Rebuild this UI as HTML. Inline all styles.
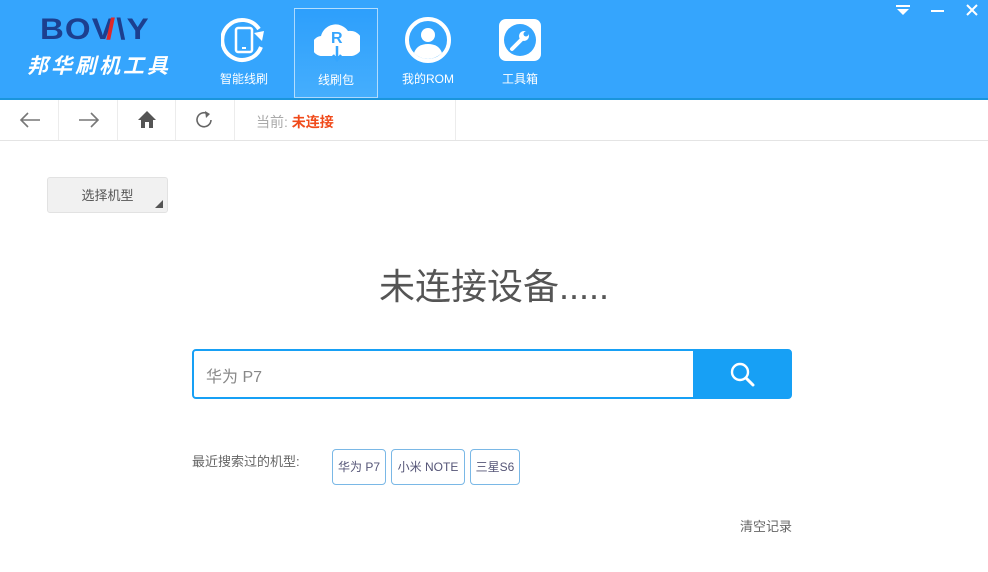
<!DOCTYPE html>
<html><head><meta charset="utf-8"><style>
*{margin:0;padding:0;box-sizing:border-box}
body{width:988px;height:572px;overflow:hidden;background:#fff;font-family:"Liberation Sans","Noto Sans CJK SC",sans-serif;position:relative}
.hdr{position:absolute;left:0;top:0;width:988px;height:100px;background:#35a5fd;border-bottom:2px solid #1a95dc}
.logo{position:absolute;left:40px;top:13px;font:bold 30px "Liberation Sans",sans-serif;color:#1c3f8f;letter-spacing:1px;transform:scaleX(1.1);transform-origin:left}
.logo2{position:absolute;left:27px;top:50px;color:#fff;font-size:21px;font-weight:bold;font-style:italic;letter-spacing:3px}
.nav{position:absolute;top:8px;width:84px;height:90px;text-align:center;color:#fff;font-size:12px}
.nav.sel{border:1px solid rgba(255,255,255,.6);background:linear-gradient(#2d9ffc,#45aefd)}
.nav svg{position:absolute;left:19px;top:9px}
.nav span{position:absolute;left:0;right:0;top:62px}
.ctl{position:absolute;top:2px;color:#fff}
.tb{position:absolute;top:100px;left:0;width:988px;height:41px;border-bottom:1px solid #e4e4e4}
.tb .d{position:absolute;top:0;height:40px;border-left:1px solid #ececec}
.sel2{position:absolute;left:47px;top:177px;width:121px;height:36px;background:#f1f1f1;border:1px solid #e2e2e2;border-radius:3px;font-size:13px;color:#555;text-align:center;line-height:36px}
.title{position:absolute;left:0;width:988px;top:258px;text-align:center;font-size:36px;color:#555}
.search{position:absolute;left:192px;top:349px;width:600px;height:50px;border:2px solid #17a0f5;border-radius:4px;background:#fff}
.search .t{position:absolute;left:12px;top:12px;font-size:16px;color:#888}
.search .b{position:absolute;right:0;top:0;width:97px;height:46px;background:#17a0f5}
.tag{position:absolute;top:449px;height:36px;border:1px solid #7ab8e6;border-radius:4px;font-size:12px;color:#557;line-height:34px;text-align:center}
</style></head><body>
<div class="hdr">
<div class="logo">BOV<span style="color:#e02828;margin-left:-8px">/</span>\Y</div>
<div class="logo2">邦华刷机工具</div>
<div class="nav" style="left:202px"><svg width="46" height="46" viewBox="0 0 46 46"><path d="M38 12 A20 20 0 1 0 40 30" fill="none" stroke="#fff" stroke-width="4"/><path d="M33 16 L43 14 L41 24Z" fill="#fff"/><rect x="15" y="11" width="16" height="24" rx="2" fill="none" stroke="#fff" stroke-width="2.5"/><rect x="21" y="30" width="4" height="2" fill="#fff"/></svg><span>智能线刷</span></div>
<div class="nav sel" style="left:294px"><svg width="46" height="46" viewBox="0 0 46 46"><path d="M9 38 A10 10 0 0 1 7 18 A15 15 0 0 1 34 13 A12 12 0 0 1 38 38Z" fill="#fff"/><text x="17" y="25" font-size="16" font-weight="bold" fill="#35a5fd" font-family="Liberation Sans">R</text><path d="M23 28 V42 M19 37 L23 42 L27 37" stroke="#35a5fd" stroke-width="2.5" fill="none"/></svg><span>线刷包</span></div>
<div class="nav" style="left:386px"><svg width="46" height="46" viewBox="0 0 46 46"><circle cx="23" cy="23" r="21" fill="none" stroke="#fff" stroke-width="4"/><circle cx="23" cy="18" r="7" fill="#fff"/><path d="M9 36 Q12 27 23 27 Q34 27 37 36 Q30 42 23 42 Q15 42 9 36Z" fill="#fff"/></svg><span>我的ROM</span></div>
<div class="nav" style="left:478px"><svg width="46" height="46" viewBox="0 0 46 46"><rect x="2" y="2" width="42" height="42" rx="7" fill="#fff"/><circle cx="23" cy="23" r="16" fill="#35a5fd"/><path d="M15 32 L25 22" stroke="#fff" stroke-width="4" stroke-linecap="round"/><circle cx="27" cy="19" r="5" fill="#fff"/><circle cx="29" cy="17" r="2.5" fill="#35a5fd"/></svg><span>工具箱</span></div>
<svg class="ctl" style="left:895px;top:4px" width="16" height="12"><rect x="1" y="1" width="14" height="2" fill="#fff"/><path d="M2 5 H14 L8 11Z" fill="#fff"/></svg>
<div class="ctl" style="left:931px;top:10px;width:13px;height:2px;background:#fff"></div>
<svg class="ctl" style="left:966px;top:4px" width="12" height="12"><path d="M1 1 L11 11 M11 1 L1 11" stroke="#fff" stroke-width="2"/></svg>
</div>
<div class="tb">
<div class="d" style="left:58px"></div><div class="d" style="left:117px"></div><div class="d" style="left:175px"></div><div class="d" style="left:234px"></div><div class="d" style="left:455px"></div>
<svg style="position:absolute;left:19px;top:11px" width="22" height="18"><path d="M21 9 H2 M9 2 L2 9 L9 16" stroke="#777" stroke-width="1.6" fill="none"/></svg>
<svg style="position:absolute;left:78px;top:11px" width="22" height="18"><path d="M1 9 H20 M13 2 L20 9 L13 16" stroke="#777" stroke-width="1.6" fill="none"/></svg>
<svg style="position:absolute;left:137px;top:10px" width="20" height="19"><path d="M10 1 L1 10 H4 V18 H8 V12 H12 V18 H16 V10 H19Z" fill="#555"/></svg>
<svg style="position:absolute;left:194px;top:10px" width="20" height="20"><path d="M14 4 A7 7 0 1 0 17 10" stroke="#666" stroke-width="1.6" fill="none"/><path d="M11 1 L16 4 L12 8" fill="#666"/></svg>
<div style="position:absolute;left:256px;top:12px;font-size:14px;color:#aaa">当前: <b style="color:#f04a1a">未连接</b></div>
</div>
<div class="sel2">选择机型<svg style="position:absolute;right:4px;bottom:4px" width="8" height="8"><path d="M8 0 V8 H0Z" fill="#555"/></svg></div>
<div class="title">未连接设备.....</div>
<div class="search"><div class="t">华为 P7</div><div class="b"><svg style="position:absolute;left:37px;top:11px" width="26" height="26"><circle cx="10" cy="10" r="8" stroke="#fff" stroke-width="2.4" fill="none"/><path d="M16 16 L23 23" stroke="#fff" stroke-width="3" stroke-linecap="round"/></svg></div></div>
<div style="position:absolute;left:192px;top:451px;font-size:13px;color:#666">最近搜索过的机型:</div>
<div class="tag" style="left:332px;width:54px">华为 P7</div>
<div class="tag" style="left:391px;width:74px">小米 NOTE</div>
<div class="tag" style="left:470px;width:50px">三星S6</div>
<div style="position:absolute;left:740px;top:516px;font-size:13px;color:#666">清空记录</div>
</body></html>
